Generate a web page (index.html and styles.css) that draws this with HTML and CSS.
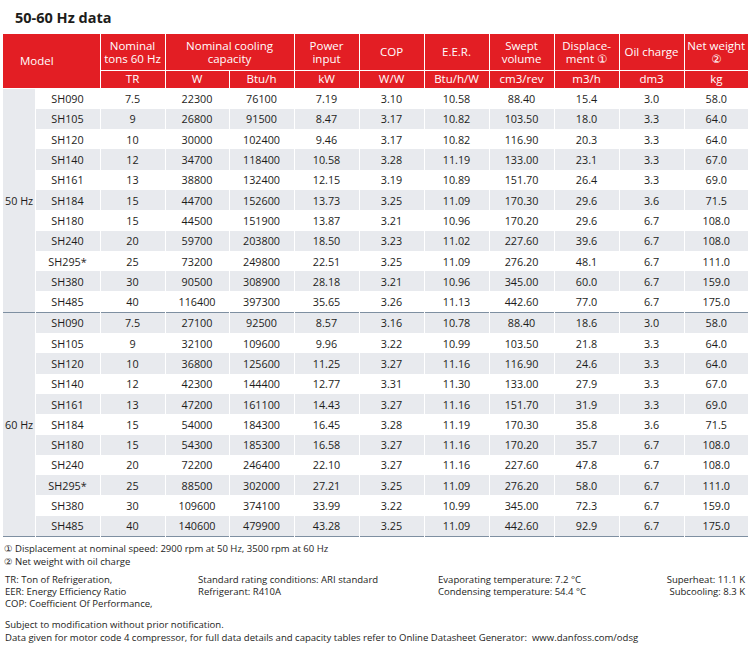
FILE: index.html
```html
<!DOCTYPE html>
<html>
<head>
<meta charset="utf-8">
<link rel="stylesheet" href="styles.css">
</head>
<body>
<h1 class="title">50-60 Hz data</h1>
<table class="data">
<colgroup>
<col class="c-grp"><col class="c-model"><col class="c65"><col class="c64"><col class="c65"><col class="c65"><col class="c65"><col class="c65"><col class="c65"><col class="c65"><col class="c65"><col class="c64">
</colgroup>
<thead>
<tr class="h1">
<th colspan="2" rowspan="2" class="model-h"><span>Model</span></th>
<th>Nominal<br>tons 60 Hz</th>
<th colspan="2">Nominal cooling<br>capacity</th>
<th>Power<br>input</th>
<th>COP</th>
<th>E.E.R.</th>
<th>Swept<br>volume</th>
<th>Displace-<br>ment ①</th>
<th>Oil charge</th>
<th>Net weight<br>②</th>
</tr>
<tr class="h2">
<th>TR</th><th>W</th><th>Btu/h</th><th>kW</th><th>W/W</th><th>Btu/h/W</th><th>cm3/rev</th><th>m3/h</th><th>dm3</th><th>kg</th>
</tr>
</thead>
<tbody class="blk">
<tr><td rowspan="11" class="grp">50 Hz</td><td>SH090</td><td>7.5</td><td>22300</td><td>76100</td><td>7.19</td><td>3.10</td><td>10.58</td><td>88.40</td><td>15.4</td><td>3.0</td><td>58.0</td></tr>
<tr class="g"><td>SH105</td><td>9</td><td>26800</td><td>91500</td><td>8.47</td><td>3.17</td><td>10.82</td><td>103.50</td><td>18.0</td><td>3.3</td><td>64.0</td></tr>
<tr><td>SH120</td><td>10</td><td>30000</td><td>102400</td><td>9.46</td><td>3.17</td><td>10.82</td><td>116.90</td><td>20.3</td><td>3.3</td><td>64.0</td></tr>
<tr class="g"><td>SH140</td><td>12</td><td>34700</td><td>118400</td><td>10.58</td><td>3.28</td><td>11.19</td><td>133.00</td><td>23.1</td><td>3.3</td><td>67.0</td></tr>
<tr><td>SH161</td><td>13</td><td>38800</td><td>132400</td><td>12.15</td><td>3.19</td><td>10.89</td><td>151.70</td><td>26.4</td><td>3.3</td><td>69.0</td></tr>
<tr class="g"><td>SH184</td><td>15</td><td>44700</td><td>152600</td><td>13.73</td><td>3.25</td><td>11.09</td><td>170.30</td><td>29.6</td><td>3.6</td><td>71.5</td></tr>
<tr><td>SH180</td><td>15</td><td>44500</td><td>151900</td><td>13.87</td><td>3.21</td><td>10.96</td><td>170.20</td><td>29.6</td><td>6.7</td><td>108.0</td></tr>
<tr class="g"><td>SH240</td><td>20</td><td>59700</td><td>203800</td><td>18.50</td><td>3.23</td><td>11.02</td><td>227.60</td><td>39.6</td><td>6.7</td><td>108.0</td></tr>
<tr><td>SH295*</td><td>25</td><td>73200</td><td>249800</td><td>22.51</td><td>3.25</td><td>11.09</td><td>276.20</td><td>48.1</td><td>6.7</td><td>111.0</td></tr>
<tr class="g"><td>SH380</td><td>30</td><td>90500</td><td>308900</td><td>28.18</td><td>3.21</td><td>10.96</td><td>345.00</td><td>60.0</td><td>6.7</td><td>159.0</td></tr>
<tr><td>SH485</td><td>40</td><td>116400</td><td>397300</td><td>35.65</td><td>3.26</td><td>11.13</td><td>442.60</td><td>77.0</td><td>6.7</td><td>175.0</td></tr>
</tbody>
<tbody class="blk">
<tr class="g"><td rowspan="11" class="grp">60 Hz</td><td>SH090</td><td>7.5</td><td>27100</td><td>92500</td><td>8.57</td><td>3.16</td><td>10.78</td><td>88.40</td><td>18.6</td><td>3.0</td><td>58.0</td></tr>
<tr><td>SH105</td><td>9</td><td>32100</td><td>109600</td><td>9.96</td><td>3.22</td><td>10.99</td><td>103.50</td><td>21.8</td><td>3.3</td><td>64.0</td></tr>
<tr class="g"><td>SH120</td><td>10</td><td>36800</td><td>125600</td><td>11.25</td><td>3.27</td><td>11.16</td><td>116.90</td><td>24.6</td><td>3.3</td><td>64.0</td></tr>
<tr><td>SH140</td><td>12</td><td>42300</td><td>144400</td><td>12.77</td><td>3.31</td><td>11.30</td><td>133.00</td><td>27.9</td><td>3.3</td><td>67.0</td></tr>
<tr class="g"><td>SH161</td><td>13</td><td>47200</td><td>161100</td><td>14.43</td><td>3.27</td><td>11.16</td><td>151.70</td><td>31.9</td><td>3.3</td><td>69.0</td></tr>
<tr><td>SH184</td><td>15</td><td>54000</td><td>184300</td><td>16.45</td><td>3.28</td><td>11.19</td><td>170.30</td><td>35.8</td><td>3.6</td><td>71.5</td></tr>
<tr class="g"><td>SH180</td><td>15</td><td>54300</td><td>185300</td><td>16.58</td><td>3.27</td><td>11.16</td><td>170.20</td><td>35.7</td><td>6.7</td><td>108.0</td></tr>
<tr><td>SH240</td><td>20</td><td>72200</td><td>246400</td><td>22.10</td><td>3.27</td><td>11.16</td><td>227.60</td><td>47.8</td><td>6.7</td><td>108.0</td></tr>
<tr class="g"><td>SH295*</td><td>25</td><td>88500</td><td>302000</td><td>27.21</td><td>3.25</td><td>11.09</td><td>276.20</td><td>58.0</td><td>6.7</td><td>111.0</td></tr>
<tr><td>SH380</td><td>30</td><td>109600</td><td>374100</td><td>33.99</td><td>3.22</td><td>10.99</td><td>345.00</td><td>72.3</td><td>6.7</td><td>159.0</td></tr>
<tr class="g"><td>SH485</td><td>40</td><td>140600</td><td>479900</td><td>43.28</td><td>3.25</td><td>11.09</td><td>442.60</td><td>92.9</td><td>6.7</td><td>175.0</td></tr>
</tbody>
</table>
<div class="notes">
<p>① Displacement at nominal speed: 2900 rpm at 50 Hz, 3500 rpm at 60 Hz</p>
<p>② Net weight with oil charge</p>
</div>
<div class="conds">
<div class="cc c1"><p>TR: Ton of Refrigeration,</p><p>EER: Energy Efficiency Ratio</p><p>COP: Coefficient Of Performance,</p></div>
<div class="cc c2"><p>Standard rating conditions: ARI standard</p><p>Refrigerant: R410A</p></div>
<div class="cc c3"><p>Evaporating temperature: 7.2 °C</p><p>Condensing temperature: 54.4 °C</p></div>
<div class="cc c4"><p>Superheat: 11.1 K</p><p>Subcooling: 8.3 K</p></div>
</div>
<div class="legal">
<p>Subject to modification without prior notification.</p>
<p>Data given for motor code 4 compressor, for full data details and capacity tables refer to Online Datasheet Generator:&nbsp; www.danfoss.com/odsg</p>
</div>
</body>
</html>
```

FILE: styles.css
```css
html, body {
  margin: 0;
  padding: 0;
  background: #ffffff;
}
body {
  padding: 0 2px 0 3px;
  font-family: "Open Sans", "DejaVu Sans", sans-serif;
  color: #1d1d1b;
}
.title {
  margin: 0;
  padding: 9px 0 0 12px;
  height: 34px;
  box-sizing: border-box;
  font-size: 14.5px;
  font-weight: 700;
  line-height: 18px;
  color: #1d1d1b;
}
.data {
  border-collapse: collapse;
  table-layout: fixed;
  width: 745px;
}
.c-grp { width: 32px; }
.c-model { width: 65px; }
.c65 { width: 65px; }
.c64 { width: 64px; }
.data th {
  background: #e31e24;
  color: #ffffff;
  font-weight: 400;
  font-size: 11.5px;
  line-height: 13px;
  border: 1px solid #ffffff;
  padding: 0;
  text-align: center;
  vertical-align: middle;
}
.data thead tr:first-child th { border-top: 0; }
.data th:first-child { border-left: 0; }
.data th:last-child { border-right: 0; }
.h1 { height: 36px; }
.h2 { height: 18px; }
.h2 th { font-size: 11.5px; line-height: 14px; }
.model-h { text-align: left !important; }
.model-h span { padding-left: 17px; }
.data td {
  font-size: 10.8px;
  height: 20.3px;
  padding: 0;
  text-align: center;
  vertical-align: middle;
  border-left: 1px solid #ffffff;
  border-right: 1px solid #ffffff;
  white-space: nowrap;
}
.data tr.g td { background: #e8eaee; }
.data td.grp {
  background: #e8eaee !important;
  text-align: left;
  padding-left: 2px;
  border-left: 0;
}
.data td:last-child { border-right: 0; }
.blk { border-bottom: 1px solid #7e8fa1; }
.notes {
  margin-top: 6px;
  font-size: 9.55px;
  line-height: 12.5px;
  padding-left: 1px;
}
.notes p, .conds p, .legal p { margin: 0; }
.conds {
  display: flex;
  margin-top: 6px;
  font-size: 9.55px;
  line-height: 12px;
  padding-left: 2px;
  padding-right: 3px;
}
.c1 { width: 193px; }
.c2 { width: 240px; }
.c3 { flex: 1; }
.c4 { text-align: right; }
.legal {
  margin-top: 8px;
  font-size: 9.55px;
  line-height: 13px;
  padding-left: 2px;
}
```
